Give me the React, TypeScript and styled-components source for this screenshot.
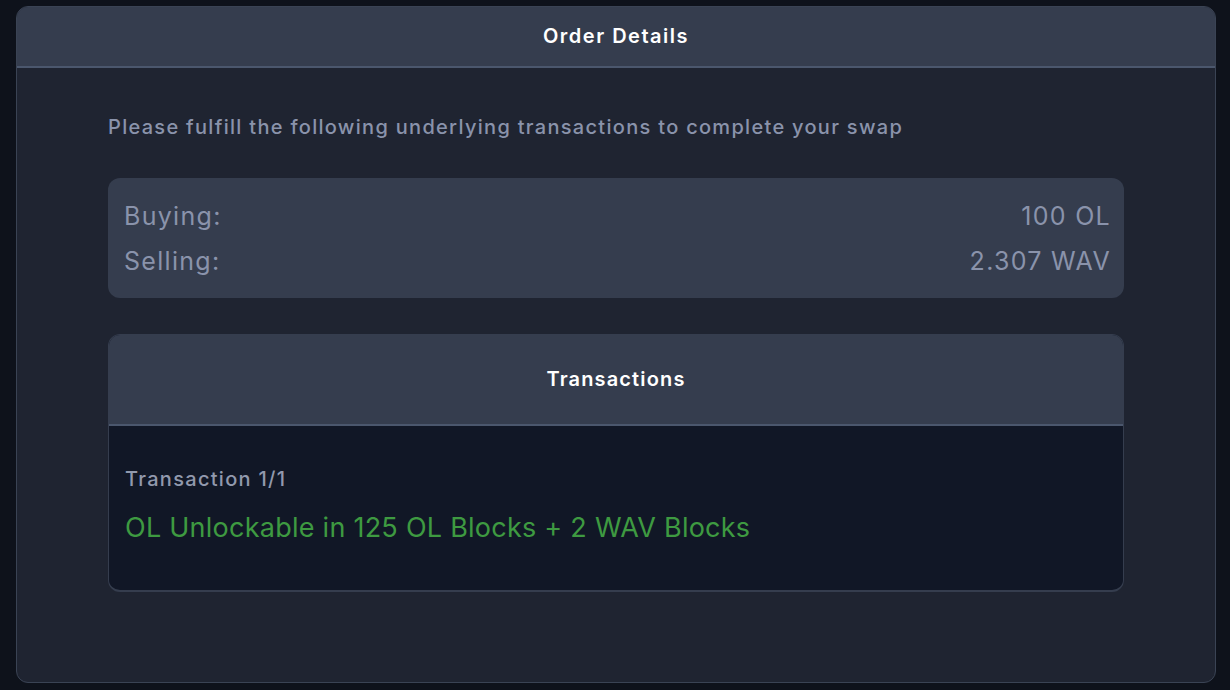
import React from "react";
import styled, { createGlobalStyle } from "styled-components";

const Global = createGlobalStyle`
  html, body { margin: 0; padding: 0; background: #0e121b; }
  body { font-family: "Inter", "Noto Sans", sans-serif; }
  * { box-sizing: border-box; }
`;

const Page = styled.div`
  width: 1230px;
  height: 690px;
  padding: 6px 14px 7px 16px;
  background: #0e121b;
`;

const Card = styled.div`
  height: 100%;
  display: flex;
  flex-direction: column;
  background: #1f2431;
  border: 1px solid #3a4354;
  border-radius: 12px;
  overflow: hidden;
`;

const Header = styled.div<{ $h: number; $ls: number }>`
  height: ${(p) => p.$h}px;
  flex-shrink: 0;
  display: flex;
  align-items: center;
  justify-content: center;
  background: #353d4e;
  border-bottom: 2px solid #4b576d;
  color: #ffffff;
  font-size: 20px;
  font-weight: 600;
  line-height: 24px;
  letter-spacing: ${(p) => p.$ls}px;
  padding-bottom: 2px;
`;

const Body = styled.div`
  padding: 45px 91px 0 91px;
  display: flex;
  flex-direction: column;
`;

const Intro = styled.div`
  color: #8a93ab;
  font-size: 20px;
  font-weight: 500;
  line-height: 28px;
  letter-spacing: 1.3px;
`;

const Summary = styled.div`
  margin-top: 37px;
  background: #353d4e;
  border-radius: 12px;
  padding: 20px 13px 18px 16px;
  display: flex;
  flex-direction: column;
  gap: 8px;
`;

const Row = styled.div`
  display: flex;
  justify-content: space-between;
  color: #8a93ab;
  font-size: 25px;
  line-height: 37px;
  letter-spacing: 1.3px;
`;

const TxCard = styled.div`
  margin-top: 36px;
  border: 1px solid #353d4e;
  border-bottom: 2px solid #353d4e;
  border-radius: 12px;
  overflow: hidden;
  background: #111726;
`;

const TxBody = styled.div`
  height: 164px;
  padding: 39px 16px 0 16px;
  display: flex;
  flex-direction: column;
  gap: 17px;
`;

const TxLabel = styled.div`
  color: #9199ad;
  font-size: 20px;
  font-weight: 500;
  line-height: 28px;
  letter-spacing: 1.3px;
`;

const TxText = styled.div`
  color: #3e9a41;
  font-size: 27px;
  line-height: 36px;
  letter-spacing: 0.25px;
`;

export default function App() {
  return (
    <>
      <Global />
      <Page>
        <Card>
          <Header $h={61} $ls={1.5}>Order Details</Header>
          <Body>
            <Intro>Please fulfill the following underlying transactions to complete your swap</Intro>
            <Summary>
              <Row>
                <span>Buying:</span>
                <span>100 OL</span>
              </Row>
              <Row>
                <span>Selling:</span>
                <span>2.307 WAV</span>
              </Row>
            </Summary>
            <TxCard>
              <Header $h={91} $ls={1.15}>Transactions</Header>
              <TxBody>
                <TxLabel>Transaction 1/1</TxLabel>
                <TxText>OL Unlockable in 125 OL Blocks + 2 WAV Blocks</TxText>
              </TxBody>
            </TxCard>
          </Body>
        </Card>
      </Page>
    </>
  );
}
